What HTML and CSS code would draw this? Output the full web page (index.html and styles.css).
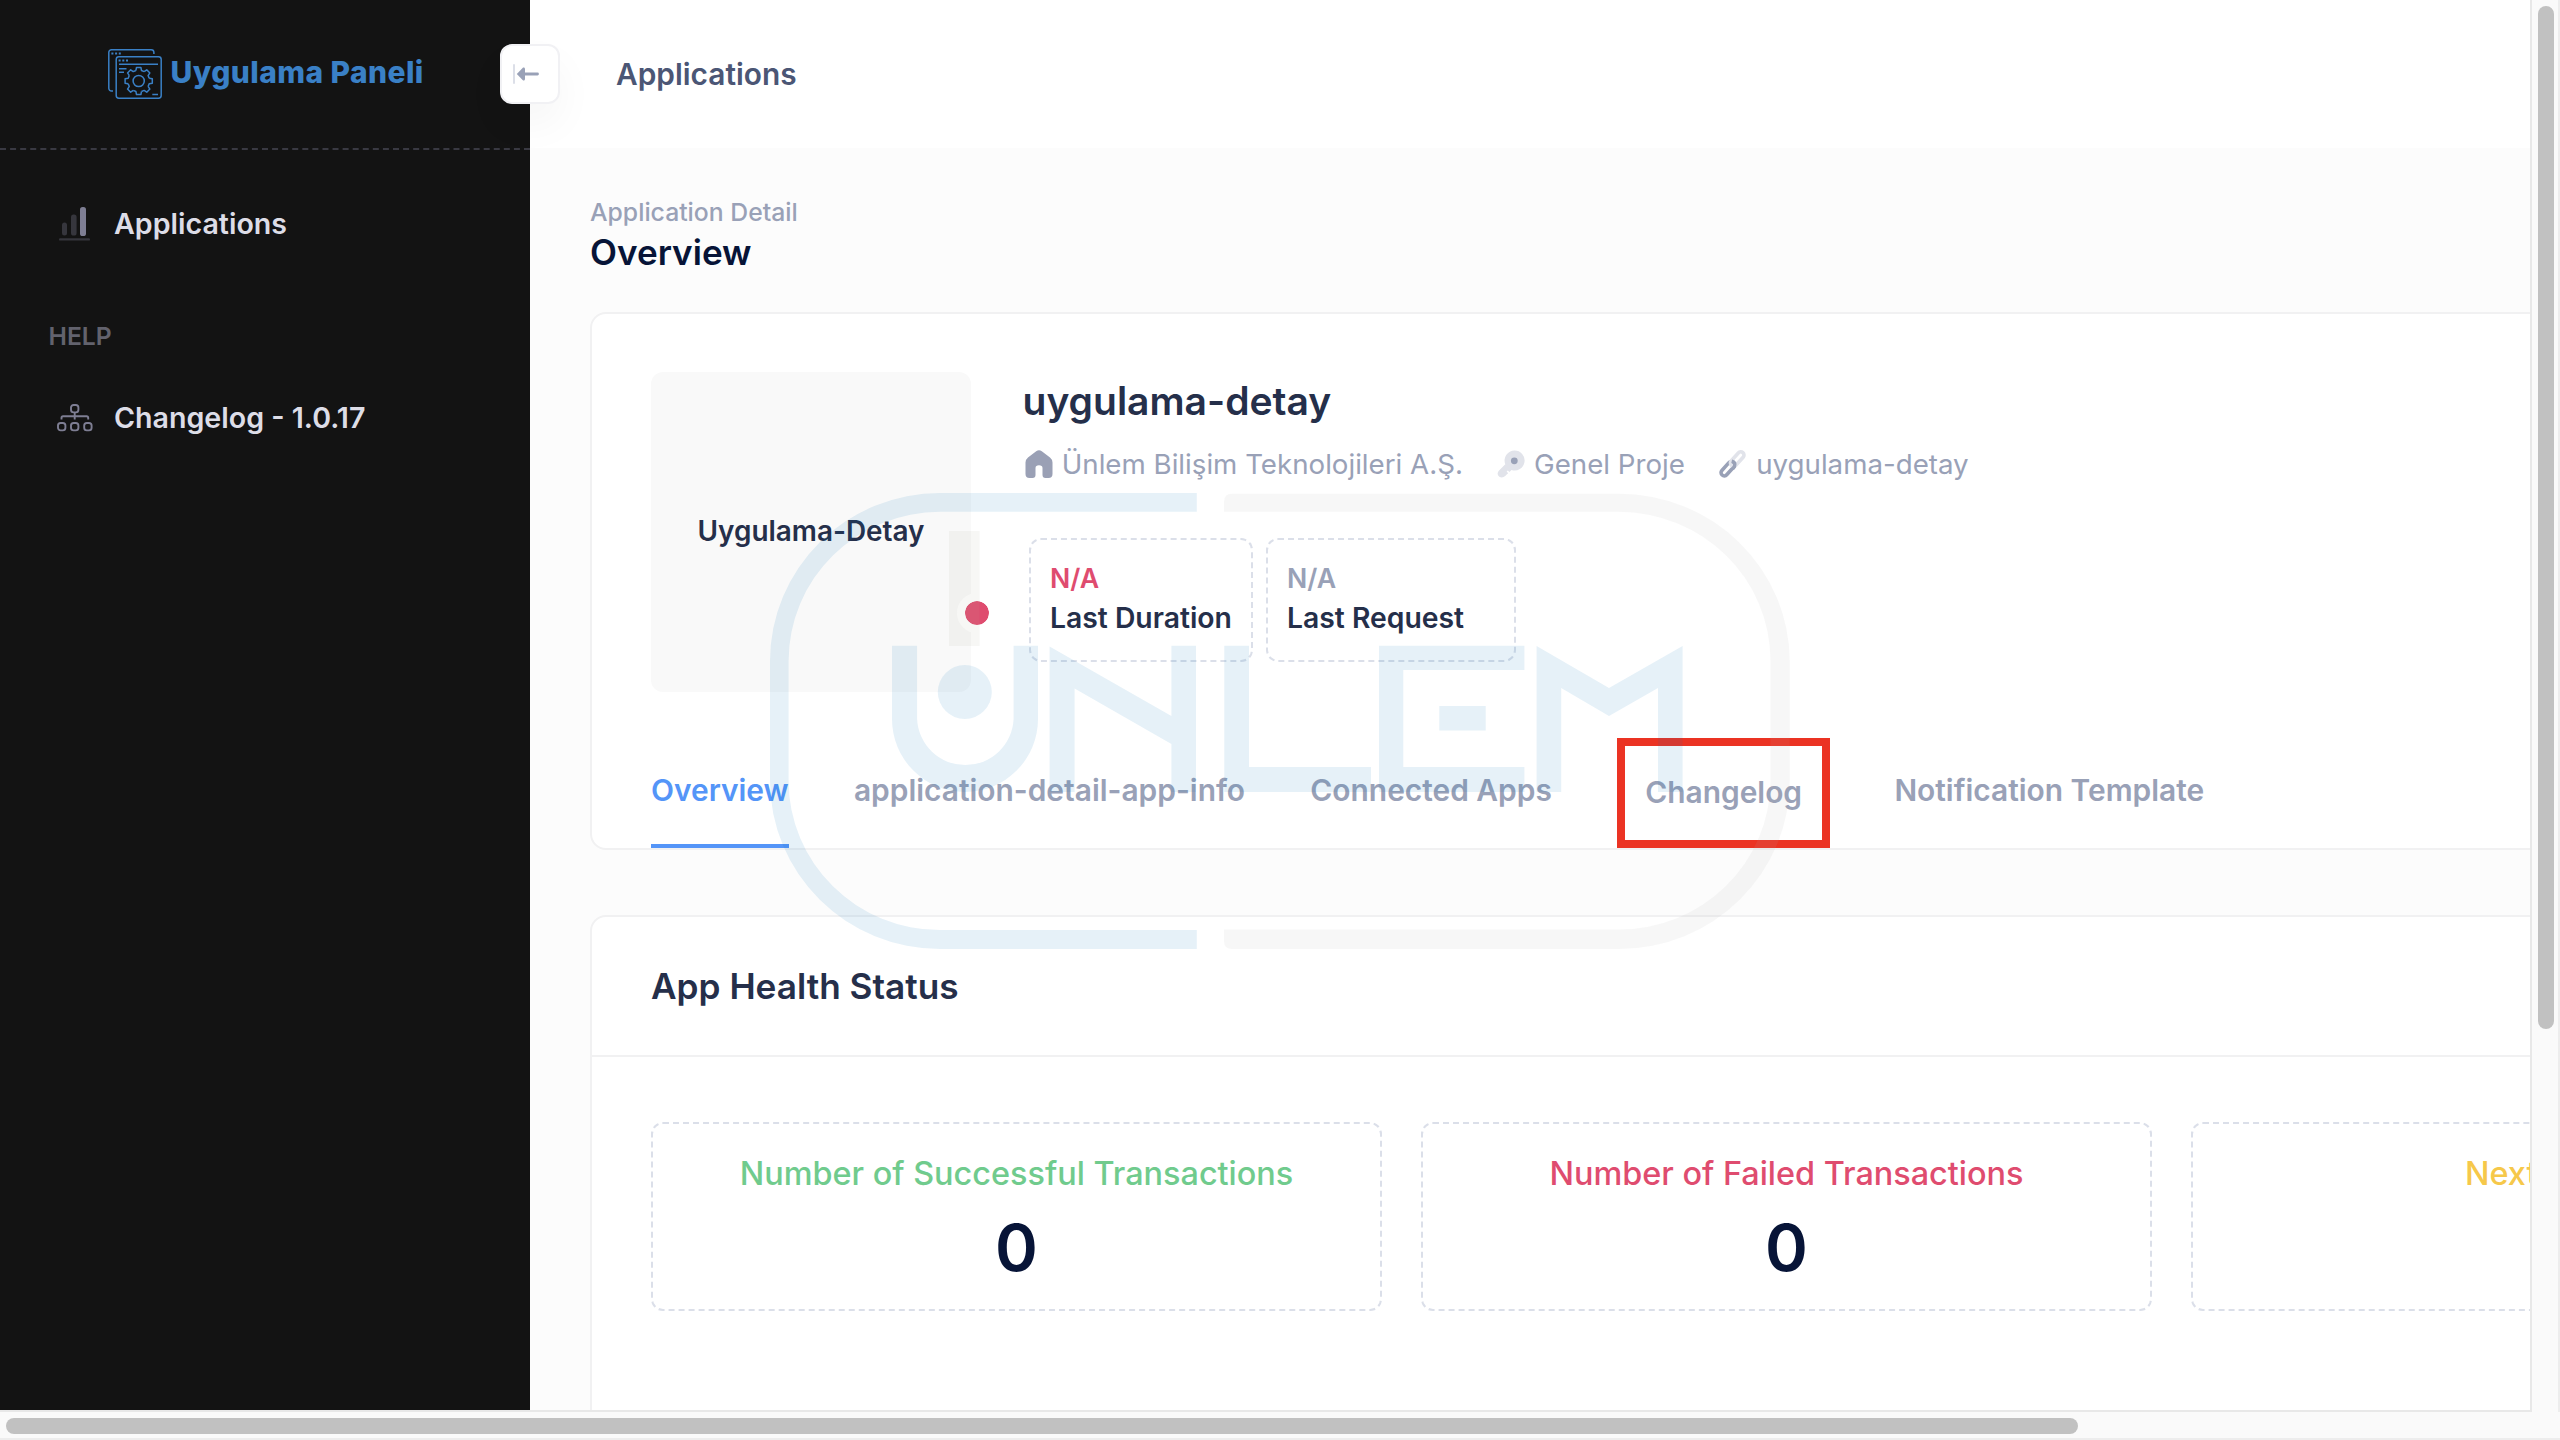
FILE: index.html
```html
<!DOCTYPE html>
<html lang="tr">
<head>
<meta charset="utf-8">
<title>Uygulama Paneli</title>
<link rel="stylesheet" href="styles.css">
</head>
<body>
<div class="viewport">
  <div class="app">
    <aside class="sidebar">
      <div class="brand">
        <svg class="brand-icon" viewBox="0 0 54 50" fill="none" stroke="#3a80c6" stroke-width="1.5">
          <path d="M5 42H3.5A2.7 2.7 0 0 1 .8 39.3V3.5A2.7 2.7 0 0 1 3.5 .8H43.2A2.7 2.7 0 0 1 45.9 3.5V5"/>
          <rect x="8.2" y="7.8" width="45" height="41.4" rx="2.7"/>
          <path d="M11 15.2H50M11 19.8H18.5M11 23.2H16M44.3 45.5H50"/>
          <path d="M3.4 4.5H13M10.6 11.4H20" stroke-width="2" stroke-dasharray="2 1.7"/>
          <circle cx="30.7" cy="32" r="5.6"/>
          <g transform="translate(30.7 32)" stroke-linejoin="round">
            <path id="tooth" d="M-2.8-10.5L-2.2-13.6H2.2L2.8-10.5L5.44-9.4"/>
            <use href="#tooth" transform="rotate(45)"/>
            <use href="#tooth" transform="rotate(90)"/>
            <use href="#tooth" transform="rotate(135)"/>
            <use href="#tooth" transform="rotate(180)"/>
            <use href="#tooth" transform="rotate(225)"/>
            <use href="#tooth" transform="rotate(270)"/>
            <use href="#tooth" transform="rotate(315)"/>
          </g>
        </svg>
        <span class="brand-name">Uygulama Paneli</span>
      </div>
      <nav class="menu">
        <a class="menu-item">
          <svg class="menu-icon" viewBox="0 0 36 36">
            <rect x="3" y="16.5" width="5" height="13" rx="2.5" fill="#36363d"/>
            <rect x="12" y="8.5" width="5.6" height="21" rx="2.6" fill="#36363d"/>
            <rect x="21" y="1" width="6" height="29" rx="2.6" fill="#7e7e93"/>
            <rect x="0" y="32.2" width="31" height="2.4" rx="1.2" fill="#36363d"/>
          </svg>
          <span>Applications</span>
        </a>
        <div class="menu-heading">HELP</div>
        <a class="menu-item menu-item-next">
          <svg class="menu-icon tree" viewBox="0 0 36 28" fill="none" stroke="#7e7e93" stroke-width="1.9">
            <rect x="14" y="1" width="7.4" height="7.4" rx="2.6"/>
            <rect x="1" y="19" width="7.4" height="7.4" rx="2.6"/>
            <rect x="14" y="19" width="7.4" height="7.4" rx="2.6"/>
            <rect x="27.2" y="19" width="7.4" height="7.4" rx="2.6"/>
            <path d="M17.7 8.4V15.5M4.5 15.5V13.8A1.6 1.6 0 0 1 6.1 12.2H29.6A1.6 1.6 0 0 1 31.2 13.8V15.5"/>
          </svg>
          <span>Changelog - 1.0.17</span>
        </a>
      </nav>
      <button class="collapse" type="button">
        <svg viewBox="0 0 28 22" fill="none">
          <rect x="0" y="1" width="2" height="20" rx="1" fill="#dcdfe8"/>
          <path d="M3.8 11L9.6 5C10.6 4 12 4.6 12 6V16C12 17.4 10.6 18 9.6 17Z" fill="#99a1b7"/>
          <path d="M10 11H24.5" stroke="#99a1b7" stroke-width="2.8" stroke-linecap="round"/>
        </svg>
      </button>
    </aside>

    <main class="main">
      <header class="topbar">Applications</header>
      <div class="content">
        <div class="crumb">Application Detail</div>
        <h1 class="page-title">Overview</h1>

        <section class="card profile">
          <div class="profile-head">
            <div class="avatar">
              <span>Uygulama-Detay</span>
              <i class="status-dot"></i>
            </div>
            <div class="detail">
              <h2 class="app-name">uygulama-detay</h2>
              <div class="info">
                <span class="info-item">
                  <svg viewBox="0 0 28 28" fill="#9aa0b5"><path d="M11.2 1.2Q14-.7 16.8 1.2L25 7.4Q27.5 9.4 27.5 12.6V24Q27.5 28 23.5 28H20.5Q17.5 28 17.5 25V18Q17.5 15.2 14 15.2T10.5 18V25Q10.5 28 7.5 28H4.5Q.5 28 .5 24V12.6Q.5 9.4 3 7.4Z"/></svg>
                  Ünlem Bilişim Teknolojileri A.Ş.
                </span>
                <span class="info-item">
                  <svg viewBox="0 0 28 28"><path d="M17.5 .5A10 10 0 1 1 14.500 20L12.500 22L10.800 20.400L9.600 21.600L11.200 23.200Q9.500 24.500 8.500 25.800Q5.500 28.500 2.300 26.800Q-.8 24 1.800 20.800L8.300 14.300A10 10 0 0 1 17.500 .5Z" fill="#e1e3ea"/><circle cx="17.300" cy="10.800" r="3.400" fill="#99a1b7"/></svg>
                  Genel Proje
                </span>
                <span class="info-item">
                  <svg viewBox="0 0 28 28" fill="none" stroke-width="3.6">
                    <rect x="-8.500" y="-3.250" width="17" height="6.500" rx="3.250" transform="translate(8.800 18.700) rotate(-48)" stroke="#99a1b7"/>
                    <rect x="-8.500" y="-3.250" width="17" height="6.500" rx="3.250" transform="translate(18.200 9) rotate(-48)" stroke="#e1e3ea"/>
                    <path d="M12.700 11.200Q17 12.200 15.400 16.500L13.500 19" stroke="#99a1b7"/>
                  </svg>
                  uygulama-detay
                </span>
              </div>
              <div class="facts">
                <div class="fact">
                  <div class="fact-value danger">N/A</div>
                  <div class="fact-label">Last Duration</div>
                </div>
                <div class="fact fact-wide">
                  <div class="fact-value">N/A</div>
                  <div class="fact-label">Last Request</div>
                </div>
              </div>
            </div>
          </div>
          <div class="tabs">
            <a class="tab active">Overview</a>
            <a class="tab">application-detail-app-info</a>
            <a class="tab">Connected Apps</a>
            <a class="tab marked">Changelog</a>
            <a class="tab">Notification Template</a>
          </div>
        </section>

        <section class="card health">
          <h2 class="card-title">App Health Status</h2>
          <div class="stats">
            <div class="stat">
              <div class="stat-label success">Number of Successful Transactions</div>
              <div class="stat-value">0</div>
            </div>
            <div class="stat">
              <div class="stat-label danger">Number of Failed Transactions</div>
              <div class="stat-value">0</div>
            </div>
            <div class="stat stat-cut">
              <div class="stat-label warning">Next</div>
            </div>
          </div>
        </section>
      </div>
    </main>
  </div>

  <div class="vscroll"><div class="vthumb"></div></div>
  <div class="hscroll"><div class="hthumb"></div></div>

  <svg class="watermark" viewBox="0 0 1020 456">
    <g fill="#0573b9" fill-opacity=".1">
      <path d="M426.800 0H170A170 168 0 0 0 0 168V288A170 168 0 0 0 170 456H426.800V437H170A151.400 149 0 0 1 18.600 288V168A151.400 149 0 0 1 170 18.800H426.800Z"/>
      <circle cx="194.800" cy="199" r="27"/>
      <path d="M122 152.700V226A73 73 0 0 0 268 226V152.700H243.600V226A48.300 48.300 0 0 1 147.100 226V152.700Z"/>
      <path d="M279.600 153.500L401.400 223V152.700H426V299H401.400V251L304.600 195.500V299H279.600Z"/>
      <path d="M454.300 152.700H479V274H601V299H454.300Z"/>
      <path d="M609 152.700H754.400V177H633.300V274H754.400V299H609ZM669.300 213H715.700V237.500H669.300Z"/>
      <path d="M766.600 153L839 195L912.600 153V299H888V195L839 223L791.200 195V299H766.600Z"/>
    </g>
    <path d="M454 18.800V8.700Q454 .7 462 .7H849A170.700 168 0 0 1 1019.700 168V288A170.700 168 0 0 1 849 456H462Q454 456 454 448V436.500H849A151.500 149 0 0 0 1000.500 288V168A151.500 149 0 0 0 849 18.800Z" fill="#afafaf" fill-opacity=".1"/>
    <rect x="179" y="38" width="30.600" height="115" fill="#b3b39f" fill-opacity=".1"/>
  </svg>
</div>
</body>
</html>
```
FILE: styles.css
```css
* { box-sizing: border-box; }

body {
  margin: 0;
  font-family: "Inter", sans-serif;
  background: #fafafa;
}

h1, h2 { margin: 0; font-weight: 600; }

.viewport {
  position: relative;
  display: grid;
  grid-template-columns: 2530px 30px;
  grid-template-rows: 1410px 30px;
  width: 2560px;
  height: 1440px;
  overflow: hidden;
}

.app {
  display: flex;
  overflow: hidden;
  background: #fcfcfc;
}

/* Sidebar */
.sidebar {
  position: relative;
  z-index: 1;
  flex: none;
  width: 530px;
  background: #131313;
}

.brand {
  display: flex;
  align-items: center;
  gap: 8.5px;
  height: 150px;
  padding-left: 108px;
  border-bottom: 2px dashed #393942;
}

.brand-icon { width: 54px; height: 50px; }

.brand-name {
  margin-top: -5px;
  font-size: 30px;
  font-weight: 800;
  letter-spacing: .42px;
  line-height: 40px;
  color: #3a80c6;
  white-space: nowrap;
}

.menu { padding-top: 44px; }

.menu-item {
  display: flex;
  align-items: center;
  gap: 19px;
  height: 60px;
  padding-left: 59px;
  font-size: 28.6px;
  font-weight: 600;
  color: #dddde7;
}

.menu-item span { margin-top: -2px; }
.menu-item-next { margin-top: 22px; padding-left: 57px; gap: 21px; }
.menu-icon { width: 36px; height: 36px; }
.menu-icon.tree { height: 28px; }

.menu-heading {
  margin-top: 52px;
  padding-left: 48.5px;
  font-size: 24.7px;
  font-weight: 600;
  line-height: 60px;
  color: #62626d;
}

.collapse {
  position: absolute;
  top: 44px;
  right: -30px;
  display: flex;
  align-items: center;
  width: 60px;
  height: 60px;
  padding: 0 0 0 11px;
  background: #fff;
  border: 2px solid #f1f1f4;
  border-radius: 12px;
  box-shadow: 0 20px 40px rgba(0, 0, 0, .04);
}

.collapse svg { width: 28px; height: 22px; }

/* Main column */
.main { flex: 1; min-width: 0; }

.topbar {
  height: 148px;
  padding-left: 86px;
  background: #fff;
  font-size: 29.85px;
  font-weight: 600;
  line-height: 148px;
  color: #4b5675;
}

.content { padding: 48px 0 0 60px; }

.crumb {
  font-size: 24.75px;
  font-weight: 500;
  line-height: 32px;
  color: #99a1b7;
}

.page-title {
  margin-top: 2px;
  font-size: 35.1px;
  line-height: 44px;
  color: #071437;
}

.card {
  width: 2393px;
  background: #fff;
  border: 2px solid #f1f1f2;
  border-radius: 16px;
}

/* Application summary */
.profile { margin-top: 38px; padding: 58px 59px 0; }
.profile-head { display: flex; }

.avatar {
  position: relative;
  display: flex;
  align-items: center;
  justify-content: center;
  width: 320px;
  height: 320px;
  padding-bottom: 3px;
  background: #f9f9f9;
  border-radius: 12px;
  font-size: 27.9px;
  font-weight: 600;
  color: #252f4a;
}

.status-dot {
  position: absolute;
  top: 221px;
  right: -26px;
  width: 40px;
  height: 40px;
  background: #df4c6f;
  background-clip: padding-box;
  border: 8px solid #fff;
  border-radius: 50%;
}

.detail { padding: 5px 0 0 51.5px; }

.app-name {
  font-size: 39px;
  line-height: 48px;
  color: #252f4a;
}

.info {
  display: flex;
  gap: 34.5px;
  margin: 19px 0 54px 2.5px;
  font-size: 27.7px;
  line-height: 40px;
  color: #99a1b7;
}

.info-item { display: flex; align-items: center; gap: 8.7px; white-space: nowrap; }
.info-item svg { width: 28px; height: 28px; }

.facts { display: flex; gap: 13px; margin-left: 6.5px; }

.fact {
  width: 224px;
  height: 124px;
  padding: 18px 18px 18px 19px;
  border: 2px dashed #dbdfe9;
  border-radius: 12px;
  line-height: 40px;
  font-weight: 600;
  white-space: nowrap;
}

.fact-wide { width: 250px; }
.fact-value { font-size: 26.7px; color: #99a1b7; }
.fact-label { font-size: 28.3px; color: #252f4a; }

.tabs {
  display: flex;
  align-items: flex-end;
  gap: 65.3px;
  height: 116px;
  margin-top: 40px;
}

.tab {
  height: 116px;
  font-size: 29.9px;
  font-weight: 600;
  line-height: 116px;
  color: #99a1b7;
  white-space: nowrap;
}

.tab.active { color: #5495f8; border-bottom: 4px solid #5495f8; }

.tab.marked {
  width: 213px;
  height: 110px;
  border: 8px solid #eb3323;
  line-height: 92px;
  text-align: center;
}

.tab.marked + .tab { margin-left: -1px; }

/* Health card */
.health { height: 640px; margin-top: 65px; }

.card-title {
  height: 140px;
  padding-left: 59px;
  border-bottom: 2px solid #f1f1f2;
  font-size: 35.2px;
  line-height: 138px;
  color: #252f4a;
}

.stats {
  display: grid;
  grid-template-columns: repeat(3, 731px);
  gap: 39px;
  padding: 65px 59px;
}

.stat {
  height: 189px;
  padding-top: 25px;
  border: 2px dashed #dbdfe9;
  border-radius: 12px;
  text-align: center;
}

.stat-label { font-size: 32.4px; font-weight: 500; line-height: 50px; }

.stat-value {
  margin-top: 9px;
  font-size: 65px;
  font-weight: 600;
  line-height: 80px;
  color: #071437;
}

.stat-cut { padding-left: 272px; text-align: left; }

.danger { color: #df4c6f; }
.success { color: #70cb8d; }
.warning { color: #f6c84a; }

/* Scrollbars */
.vscroll {
  height: 1412px;
  padding: 6px 0 0 6px;
  border-left: 2px solid #e8e8e8;
  border-right: 2px solid #ededed;
}

.vthumb { width: 16px; height: 1023px; background: #c1c1c1; border-radius: 8px; }

.hscroll {
  grid-column: 1 / -1;
  padding: 6px 0 0 6px;
  background: linear-gradient(#e8e8e8, #e8e8e8) 0 0 / 2532px 2px no-repeat;
  border-bottom: 2px solid #ededed;
}

.hthumb { width: 2072px; height: 16px; margin-top: 2px; background: #c1c1c1; border-radius: 8px; }

/* Brand mark laid over the whole page */
.watermark {
  position: absolute;
  top: 493px;
  left: 770px;
  z-index: 2;
  width: 1020px;
  height: 456px;
  pointer-events: none;
}
```
